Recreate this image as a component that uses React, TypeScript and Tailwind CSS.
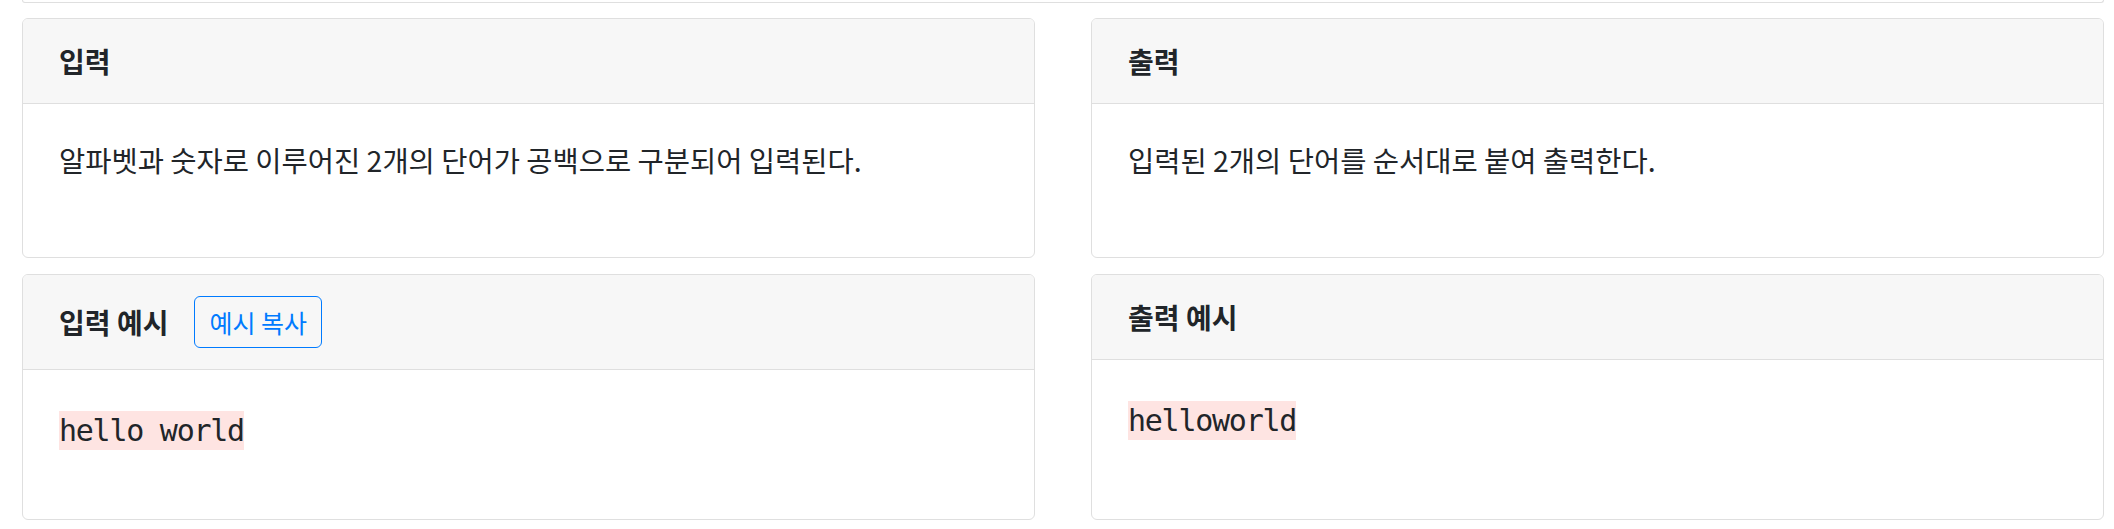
const cards = [
  { title: "입력", kind: "text", body: "알파벳과 숫자로 이루어진 2개의 단어가 공백으로 구분되어 입력된다." },
  { title: "출력", kind: "text", body: "입력된 2개의 단어를 순서대로 붙여 출력한다." },
  { title: "입력 예시", kind: "code", body: "hello world", copy: true },
  { title: "출력 예시", kind: "code", body: "helloworld" },
];

export default function App() {
  return (
    <div className="min-h-screen bg-white pl-[22px] pr-[10px] font-['Noto_Sans_CJK_KR','Noto_Sans',sans-serif] text-[#212529]">
      {/* tail of the card above */}
      <div className="h-[3px] border-x border-b border-[#dfdfdf] rounded-b-[6px]" />

      <div className="mt-[15px] grid grid-cols-2 gap-x-[56px] gap-y-[16px]">
        {cards.map((card) => (
          <div key={card.title} className="flex flex-col border border-[#dfdfdf] rounded-[6px] overflow-hidden bg-white">
            <div className="flex items-center bg-[#f7f7f7] border-b border-[#dfdfdf] px-[36px] py-[21px]">
              <h3 className="text-[28px] font-bold leading-[42px]">{card.title}</h3>
              {card.copy && (
                <button className="ml-[26px] h-[52px] px-[14px] border border-[#007bff] rounded-[6px] text-[#007bff] text-[25px] leading-none">
                  예시 복사
                </button>
              )}
            </div>
            {card.kind === "text" ? (
              <div className="flex-1 px-[36px] pt-[36px] pb-[77px]">
                <p className="text-[28.5px] leading-[40px]">{card.body}</p>
              </div>
            ) : (
              <div className="flex-1 px-[36px] pt-[41px] pb-[69px]">
                <code className="inline-block bg-[#fee4e2] font-['DejaVu_Sans_Mono',monospace] text-[30px] tracking-[-1.25px] leading-[39px] whitespace-pre">
                  {card.body}
                </code>
              </div>
            )}
          </div>
        ))}
      </div>
    </div>
  );
}
